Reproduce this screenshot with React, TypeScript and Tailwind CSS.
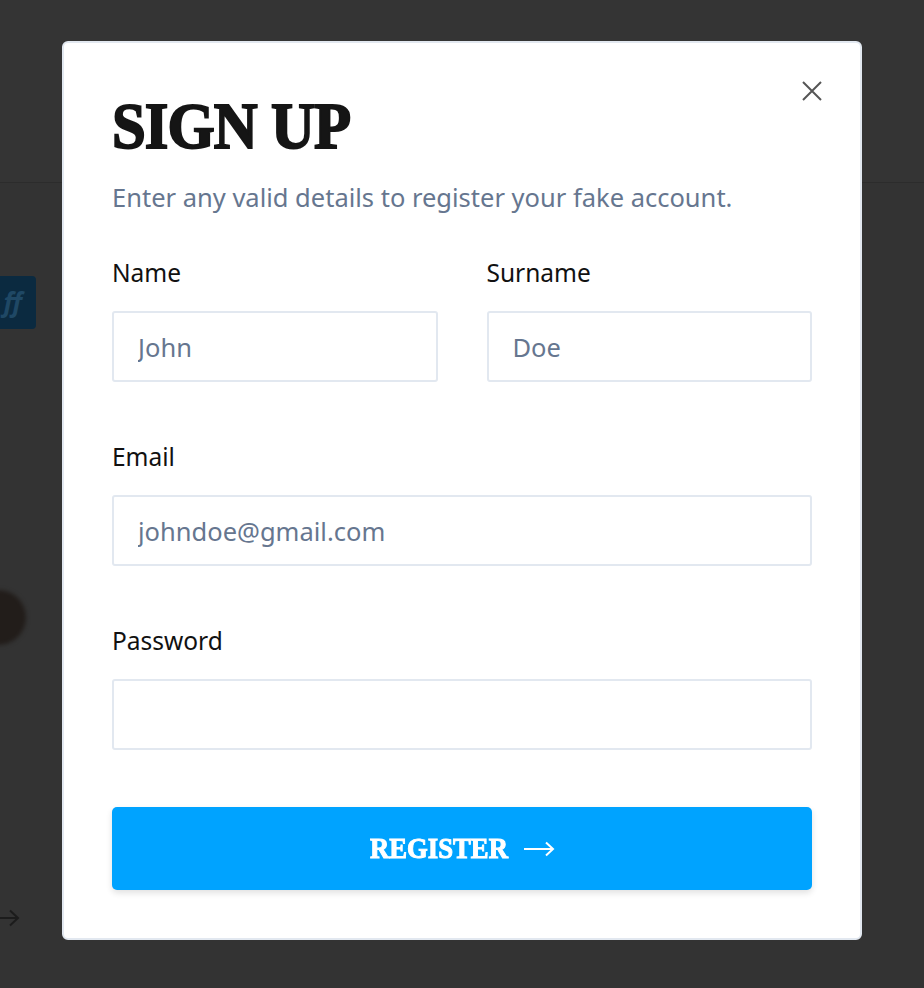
import React from 'react';

const sans = "font-['Noto_Sans','Open_Sans',sans-serif]";
const slab = "font-['Liberation_Serif','Times_New_Roman',serif]";

function Field({ label, placeholder, type = 'text' }: { label: string; placeholder?: string; type?: string }) {
  return (
    <label className="flex flex-col">
      <span className="text-[24.5px] leading-[32px] text-[#111]">{label}</span>
      <input
        type={type}
        placeholder={placeholder}
        className="mt-[22px] h-[71px] w-full rounded-[3px] border-2 border-[#e2e8f0] bg-white px-[24px] text-[25.5px] text-[#1e293b] placeholder:text-[#66768f] outline-none"
      />
    </label>
  );
}

export default function App() {
  return (
    <div className={`relative h-[988px] w-full overflow-hidden bg-[#333333] ${sans}`}>
      {/* page behind the overlay */}
      <div className="h-[183px] border-b border-[#2c2c2c] bg-[#343434]" />
      <div className="absolute left-[-10px] top-[276px] flex h-[53px] w-[46px] items-center justify-end overflow-hidden rounded-[4px] bg-[#0b2a40] pr-[14px]">
        <span className="text-[26px] font-bold italic text-[#1f4865]">ff</span>
      </div>
      <div className="absolute left-[-30px] top-[590px] h-[55px] w-[56px] rounded-[50%] bg-[#221d1a] blur-[2px]" />
      <svg className="absolute left-0 top-[909px] text-[#1c1c1c]" width="20" height="18" viewBox="0 0 20 18" fill="none" stroke="currentColor" strokeWidth="2">
        <path d="M-4 9H18M10 1.5L18 9L10 16.5" />
      </svg>

      {/* modal */}
      <div className="absolute left-[62px] top-[41px] w-[800px] rounded-[6px] border-2 border-[#e2e8f0] bg-white px-[48px] pb-[48px] pt-[54px]">
        <button className="absolute right-[36px] top-[36px] p-[1px] text-[#555]" aria-label="Close">
          <svg width="22" height="22" viewBox="0 0 22 22" fill="none" stroke="currentColor" strokeWidth="2">
            <path d="M2 2L20 20M20 2L2 20" />
          </svg>
        </button>

        <h1 className={`${slab} h-[58px] text-[66px] font-bold leading-[58px] text-[#151515]`}>
          <span className="inline-block origin-left scale-x-[0.92] whitespace-nowrap tracking-[-1px] [-webkit-text-stroke:2px_#151515]">SIGN UP</span>
        </h1>
        <p className="mt-[26px] text-[25.5px] leading-[32px] text-[#66768f]">Enter any valid details to register your fake account.</p>

        <div className="mt-[44px] grid grid-cols-2 gap-x-[49px]">
          <Field label="Name" placeholder="John" />
          <Field label="Surname" placeholder="Doe" />
        </div>
        <div className="mt-[59px]">
          <Field label="Email" placeholder="johndoe@gmail.com" type="email" />
        </div>
        <div className="mt-[59px]">
          <Field label="Password" type="password" />
        </div>

        <button className="mt-[57px] flex h-[83px] w-full items-center justify-center gap-[17px] rounded-[5px] bg-[#00a3ff] text-white shadow-[0_3px_6px_rgba(0,0,0,0.12)]">
          <span className={`${slab} block w-[137px] overflow-visible text-left text-[29px] font-bold`}>
            <span className="inline-block origin-left scale-x-[0.92] whitespace-nowrap [-webkit-text-stroke:1px_#ffffff]">REGISTER</span>
          </span>
          <svg width="31" height="16" viewBox="0 0 31 16" fill="none" stroke="currentColor" strokeWidth="2">
            <path d="M0 8H29M22 1.5L29 8L22 14.5" />
          </svg>
        </button>
      </div>
    </div>
  );
}
